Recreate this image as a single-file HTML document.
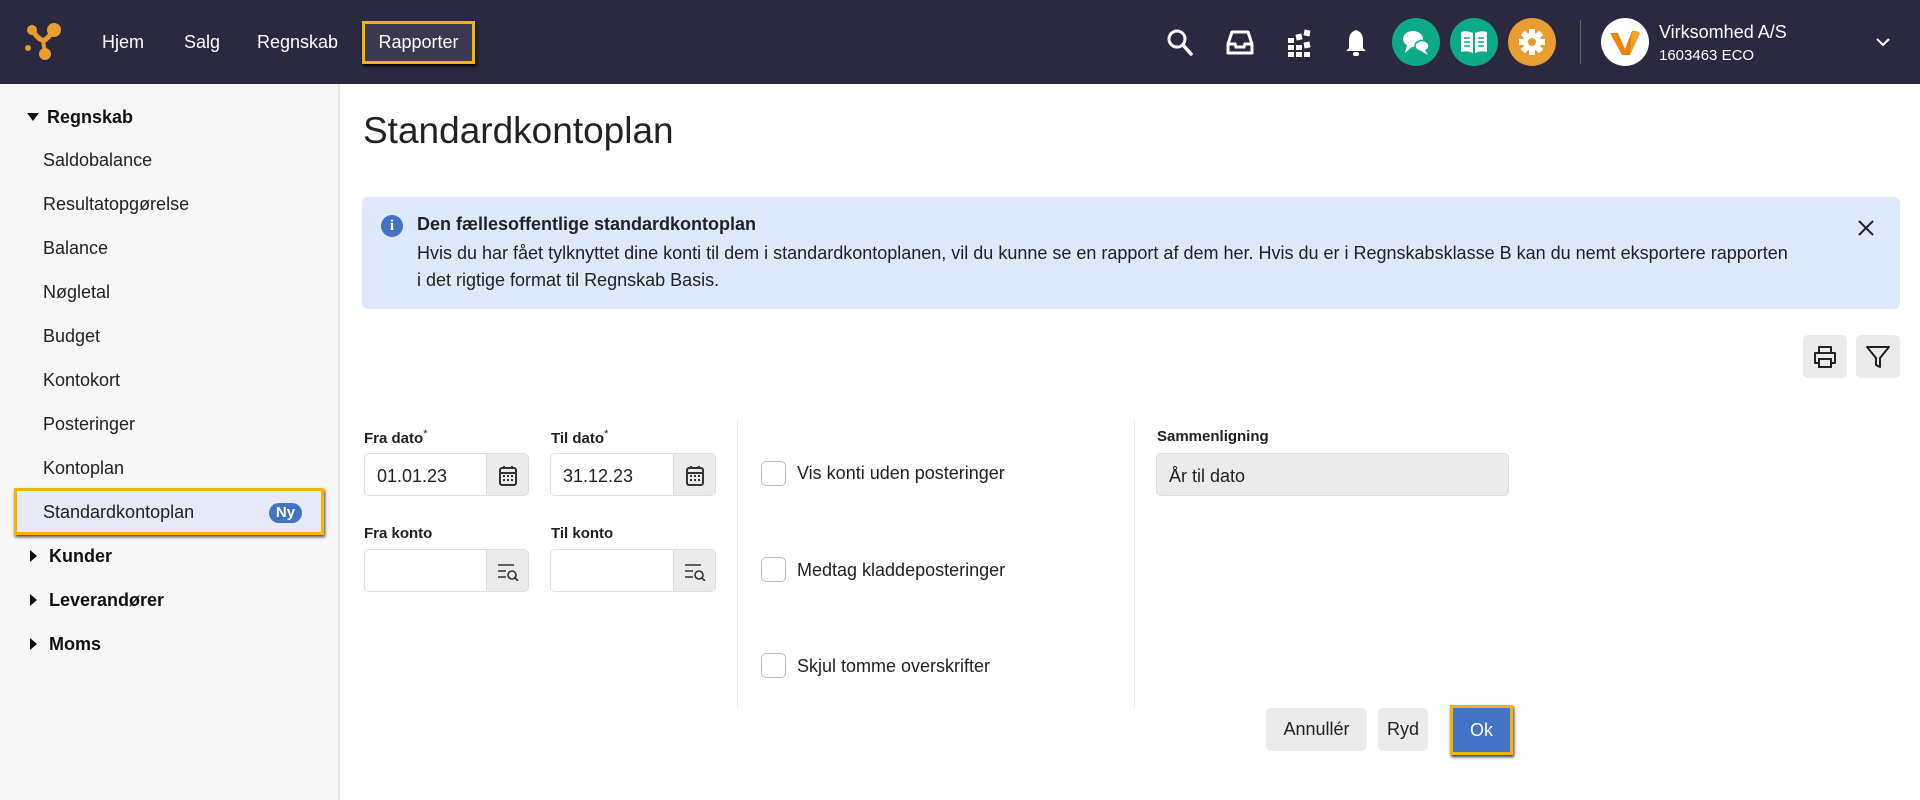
<!DOCTYPE html>
<html><head><meta charset="utf-8"><style>
*{box-sizing:border-box;margin:0;padding:0}
body{width:1920px;height:800px;overflow:hidden;font-family:"Liberation Sans",Arial,sans-serif;background:#fff;color:#222;position:relative}
.abs{position:absolute}
.hdr{left:0;top:0;width:1920px;height:84px;background:#2a2940}
.nav{top:0;height:84px;line-height:84px;color:#fff;font-size:18px}
.side{left:0;top:84px;width:340px;height:716px;background:#f7f7f7;border-right:2px solid #e6e6e6}
.si{left:43px;font-size:18px;color:#222}
.sh{font-size:18px;font-weight:bold;color:#111}
.tri{display:inline-block;width:0;height:0;margin-right:8px;vertical-align:middle}
.lbl{font-size:15px;font-weight:bold;color:#222}
.inp{border:1px solid #ddd;border-radius:5px;background:#fff;height:43px;overflow:hidden}
.inp .t{position:absolute;left:12px;top:12px;font-size:18px}
.inp .b{position:absolute;right:0;top:0;width:42px;height:43px;background:#ebebeb;border-left:1px solid #ddd;display:flex;align-items:center;justify-content:center}
.cb{width:25px;height:25px;border:1.5px solid #bbb;border-radius:5px;background:#fff}
.ct{font-size:18px;color:#222}
.btn{height:43px;border-radius:5px;background:#ebebeb;font-size:18px;text-align:center;line-height:43px;color:#222}
.circ{width:48px;height:48px;border-radius:50%;top:18px;display:flex;align-items:center;justify-content:center}
</style></head><body>
<div class="abs hdr"></div>
<svg class="abs" style="left:24px;top:20px" width="40" height="44" viewBox="0 0 40 44">
<circle cx="8" cy="10" r="5" fill="#e89d31"/><circle cx="30" cy="10" r="7" fill="#e89d31"/><circle cx="4" cy="28" r="3" fill="#e89d31"/><circle cx="21" cy="34" r="6" fill="#e89d31"/>
<path d="M8 10 Q16 22 21 20 Q26 16 30 10" stroke="#e89d31" stroke-width="5" fill="none"/><path d="M19 20 L21 34" stroke="#e89d31" stroke-width="4"/></svg>
<div class="abs nav" style="left:102px">Hjem</div>
<div class="abs nav" style="left:184px">Salg</div>
<div class="abs nav" style="left:257px">Regnskab</div>
<div class="abs" style="left:362px;top:21px;width:113px;height:43px;border:3px solid #f5b400;background:#3a3950;color:#fff;font-size:18px;text-align:center;line-height:37px;box-shadow:1px 2px 3px #000">Rapporter</div>
<svg class="abs" style="left:1166px;top:28px" width="28" height="30" viewBox="0 0 28 30"><circle cx="11" cy="11" r="8" stroke="#fff" stroke-width="3" fill="none"/><path d="M17 17 L25 26" stroke="#fff" stroke-width="3.5" stroke-linecap="round"/></svg>
<svg class="abs" style="left:1226px;top:30px" width="28" height="26" viewBox="0 0 28 26"><path d="M6 2 H22 L26 14 V23 H2 V14 Z" stroke="#fff" stroke-width="3" fill="none" stroke-linejoin="round"/><path d="M2 14 H9 L10 17 H18 L19 14 H26" stroke="#fff" stroke-width="3" fill="none"/></svg>
<svg class="abs" style="left:1287px;top:29px" width="26" height="28" viewBox="0 0 26 28"><g fill="#fff"><rect x="1" y="9" width="6" height="5"/><rect x="1" y="16" width="6" height="5"/><rect x="1" y="23" width="6" height="5"/><rect x="9" y="16" width="6" height="5"/><rect x="9" y="23" width="6" height="5"/><rect x="17" y="23" width="6" height="5"/><rect x="9" y="5" width="6" height="6" transform="rotate(-12 12 8)"/><rect x="17" y="1" width="6" height="6" transform="rotate(10 20 4)"/><rect x="17" y="13" width="6" height="6" transform="rotate(-10 20 16)"/></g></svg>
<svg class="abs" style="left:1344px;top:28px" width="24" height="30" viewBox="0 0 24 30"><path d="M12 2 C6 4 5 8 5 13 V20 L2 23 H22 L19 20 V13 C19 8 18 4 12 2Z" fill="#fff"/><rect x="9" y="24" width="6" height="4" rx="2" fill="#fff"/></svg>
<div class="abs circ" style="left:1392px;background:#0ea987"><svg width="30" height="30" viewBox="0 0 30 30"><ellipse cx="12" cy="12" rx="10" ry="8" fill="#fff"/><path d="M6 18 L4 26 L12 19Z" fill="#fff"/><ellipse cx="21" cy="19" rx="7" ry="5.5" fill="#fff" stroke="#0ea987" stroke-width="1.5"/><path d="M24 23 L27 28 L20 24Z" fill="#fff"/></svg></div>
<div class="abs circ" style="left:1450px;background:#0ea987"><svg width="30" height="26" viewBox="0 0 30 26"><path d="M2 3 Q8 1 14 4 V24 Q8 21 2 23Z M28 3 Q22 1 16 4 V24 Q22 21 28 23Z" fill="#fff"/><g stroke="#0ea987" stroke-width="1.5"><path d="M5 9 H11 M5 13 H11 M5 17 H11 M19 9 H25 M19 13 H25 M19 17 H25"/></g></svg></div>
<div class="abs circ" style="left:1508px;background:#e89d31"><svg width="28" height="28" viewBox="0 0 28 28"><g fill="#fff" transform="translate(14 14)"><circle r="9"/><rect x="-3" y="-13" width="6" height="26"/><rect x="-3" y="-13" width="6" height="26" transform="rotate(45)"/><rect x="-3" y="-13" width="6" height="26" transform="rotate(90)"/><rect x="-3" y="-13" width="6" height="26" transform="rotate(135)"/><circle r="4" fill="#e89d31"/></g></svg></div>
<div class="abs" style="left:1580px;top:20px;width:1px;height:44px;background:#666"></div>
<div class="abs circ" style="left:1601px;background:#fff"><svg width="34" height="34" viewBox="0 0 34 34"><path d="M2 8 L10 8 L17 24 L24 6 Q30 6 32 8 L22 30 L14 30 Z" fill="#e8860c"/><path d="M22 30 L32 8 Q28 5 24 6" fill="#f3a32c"/></svg></div>
<div class="abs" style="left:1659px;top:22px;color:#fff;font-size:18px">Virksomhed A/S</div>
<div class="abs" style="left:1659px;top:47px;color:#fff;font-size:15px">1603463 ECO</div>
<svg class="abs" style="left:1875px;top:36px" width="16" height="12" viewBox="0 0 16 12"><path d="M2 3 L8 9 L14 3" stroke="#fff" stroke-width="2" fill="none"/></svg>

<div class="abs side"></div>
<div class="abs sh" style="left:27px;top:107px"><span class="tri" style="border-left:6px solid transparent;border-right:6px solid transparent;border-top:8px solid #111;margin-top:-3px"></span>Regnskab</div>
<div class="abs si" style="top:150px">Saldobalance</div>
<div class="abs si" style="top:194px">Resultatopgørelse</div>
<div class="abs si" style="top:238px">Balance</div>
<div class="abs si" style="top:282px">Nøgletal</div>
<div class="abs si" style="top:326px">Budget</div>
<div class="abs si" style="top:370px">Kontokort</div>
<div class="abs si" style="top:414px">Posteringer</div>
<div class="abs si" style="top:458px">Kontoplan</div>
<div class="abs" style="left:14px;top:488px;width:310px;height:47px;border:3px solid #f5b400;background:#e6eaf6;box-shadow:1px 2px 3px #444"></div>
<div class="abs si" style="top:502px">Standardkontoplan</div>
<div class="abs" style="left:269px;top:503px;width:33px;height:20px;border-radius:10px;background:#4472c4;color:#fff;font-size:15px;font-weight:bold;text-align:center;line-height:20px">Ny</div>
<div class="abs sh" style="left:30px;top:546px"><span class="tri" style="border-top:6px solid transparent;border-bottom:6px solid transparent;border-left:7px solid #111;margin-top:-3px;margin-right:12px"></span>Kunder</div>
<div class="abs sh" style="left:30px;top:590px"><span class="tri" style="border-top:6px solid transparent;border-bottom:6px solid transparent;border-left:7px solid #111;margin-top:-3px;margin-right:12px"></span>Leverandører</div>
<div class="abs sh" style="left:30px;top:634px"><span class="tri" style="border-top:6px solid transparent;border-bottom:6px solid transparent;border-left:7px solid #111;margin-top:-3px;margin-right:12px"></span>Moms</div>

<div class="abs" style="left:363px;top:110px;font-size:37px;color:#222">Standardkontoplan</div>
<div class="abs" style="left:362px;top:197px;width:1538px;height:112px;background:#dde9fb;border-radius:6px"></div>
<div class="abs" style="left:381px;top:215px;width:22px;height:22px;border-radius:50%;background:#4472c4;color:#fff;font:bold 15px 'Liberation Serif',serif;text-align:center;line-height:22px">i</div>
<div class="abs" style="left:417px;top:214px;font-size:18px;font-weight:bold;color:#222">Den fællesoffentlige standardkontoplan</div>
<div class="abs" style="left:417px;top:240px;width:1440px;font-size:18px;line-height:26.5px;color:#222;white-space:nowrap">Hvis du har fået tylknyttet dine konti til dem i standardkontoplanen, vil du kunne se en rapport af dem her. Hvis du er i Regnskabsklasse B kan du nemt eksportere rapporten<br>i det rigtige format til Regnskab Basis.</div>
<svg class="abs" style="left:1857px;top:219px" width="18" height="18" viewBox="0 0 18 18"><path d="M2 2 L16 16 M16 2 L2 16" stroke="#222" stroke-width="2"/></svg>

<div class="abs" style="left:1803px;top:335px;width:44px;height:43px;background:#ebebeb;border-radius:5px;display:flex;align-items:center;justify-content:center"><svg width="26" height="24" viewBox="0 0 26 24"><path d="M7 7 V2 H19 V7 M7 18 H3 V8 H23 V18 H19" stroke="#222" stroke-width="2" fill="none" stroke-linejoin="round"/><rect x="7" y="14" width="12" height="8" stroke="#222" stroke-width="2" fill="none"/></svg></div>
<div class="abs" style="left:1856px;top:335px;width:44px;height:43px;background:#ebebeb;border-radius:5px;display:flex;align-items:center;justify-content:center"><svg width="26" height="26" viewBox="0 0 26 26"><path d="M2 3 H24 L15 14 V23 L11 21 V14 Z" stroke="#222" stroke-width="2" fill="none" stroke-linejoin="round"/></svg></div>

<div class="abs lbl" style="left:364px;top:428px">Fra dato<sup style="font-weight:normal;font-size:11px">*</sup></div>
<div class="abs lbl" style="left:551px;top:428px">Til dato<sup style="font-weight:normal;font-size:11px">*</sup></div>
<div class="abs inp" style="left:364px;top:453px;width:165px"><span class="t">01.01.23</span><span class="b"><svg width="20" height="22" viewBox="0 0 20 22"><rect x="2" y="3" width="16" height="17" rx="2" stroke="#333" stroke-width="2" fill="none"/><path d="M2 8 H18 M6 1 V4 M14 1 V4" stroke="#333" stroke-width="2"/><g fill="#333"><rect x="5" y="10" width="2" height="2"/><rect x="9" y="10" width="2" height="2"/><rect x="13" y="10" width="2" height="2"/><rect x="5" y="14" width="2" height="2"/><rect x="9" y="14" width="2" height="2"/><rect x="13" y="14" width="2" height="2"/></g></svg></span></div>
<div class="abs inp" style="left:550px;top:453px;width:166px"><span class="t">31.12.23</span><span class="b"><svg width="20" height="22" viewBox="0 0 20 22"><rect x="2" y="3" width="16" height="17" rx="2" stroke="#333" stroke-width="2" fill="none"/><path d="M2 8 H18 M6 1 V4 M14 1 V4" stroke="#333" stroke-width="2"/><g fill="#333"><rect x="5" y="10" width="2" height="2"/><rect x="9" y="10" width="2" height="2"/><rect x="13" y="10" width="2" height="2"/><rect x="5" y="14" width="2" height="2"/><rect x="9" y="14" width="2" height="2"/><rect x="13" y="14" width="2" height="2"/></g></svg></span></div>
<div class="abs lbl" style="left:364px;top:525px">Fra konto</div>
<div class="abs lbl" style="left:551px;top:525px">Til konto</div>
<div class="abs inp" style="left:364px;top:549px;width:165px"><span class="b"><svg width="22" height="18" viewBox="0 0 22 18"><path d="M1 2 H17 M1 8 H9 M1 14 H9" stroke="#333" stroke-width="1.6"/><circle cx="15" cy="12" r="4" stroke="#333" stroke-width="1.6" fill="none"/><path d="M18 15 L21 18" stroke="#333" stroke-width="1.6"/></svg></span></div>
<div class="abs inp" style="left:550px;top:549px;width:166px"><span class="b"><svg width="22" height="18" viewBox="0 0 22 18"><path d="M1 2 H17 M1 8 H9 M1 14 H9" stroke="#333" stroke-width="1.6"/><circle cx="15" cy="12" r="4" stroke="#333" stroke-width="1.6" fill="none"/><path d="M18 15 L21 18" stroke="#333" stroke-width="1.6"/></svg></span></div>

<div class="abs" style="left:737px;top:420px;width:1px;height:288px;background:#e6e6e6"></div>
<div class="abs" style="left:1134px;top:420px;width:1px;height:288px;background:#e6e6e6"></div>
<div class="abs cb" style="left:761px;top:461px"></div><div class="abs ct" style="left:797px;top:463px">Vis konti uden posteringer</div>
<div class="abs cb" style="left:761px;top:557px"></div><div class="abs ct" style="left:797px;top:560px">Medtag kladdeposteringer</div>
<div class="abs cb" style="left:761px;top:653px"></div><div class="abs ct" style="left:797px;top:656px">Skjul tomme overskrifter</div>

<div class="abs lbl" style="left:1157px;top:428px">Sammenligning</div>
<div class="abs" style="left:1156px;top:453px;width:353px;height:43px;background:#ebebeb;border:1px solid #ddd;border-radius:5px;font-size:18px;padding:12px 0 0 12px">År til dato</div>

<div class="abs btn" style="left:1266px;top:708px;width:101px">Annullér</div>
<div class="abs btn" style="left:1378px;top:708px;width:50px">Ryd</div>
<div class="abs" style="left:1450px;top:705px;width:63px;height:50px;border:3px solid #f5b400;background:#4472c4;color:#fff;font-size:18px;text-align:center;line-height:44px;box-shadow:1px 2px 3px #333">Ok</div>
</body></html>
